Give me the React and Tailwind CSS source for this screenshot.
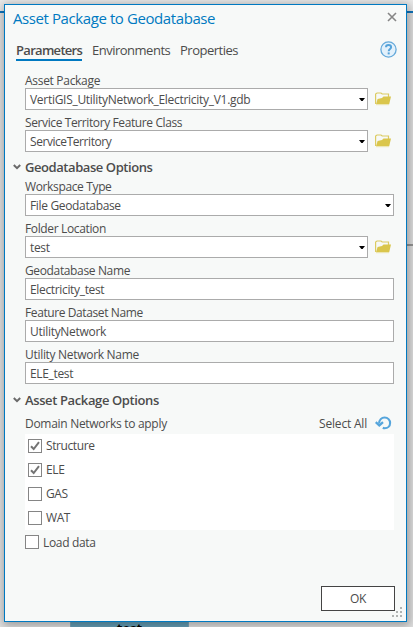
import { useState } from "react";

const DOMAIN_NETWORKS = ["Structure", "ELE", "GAS", "WAT"];

function FolderIcon() {
  return (
    <svg className="h-4 w-4 shrink-0" viewBox="0 0 16 16" fill="none">
      <path d="M0.6 13V3L2 2H6L7.2 3H13.5V6" stroke="#dccb62" strokeWidth="1.2" />
      <path d="M1 13.2L2.6 8L7 7L8.5 5.5H16L14.2 13.2H1Z" fill="#dac64c" />
      <path d="M1 13.7H14" stroke="#ece4ae" />
    </svg>
  );
}

function HelpIcon() {
  return (
    <svg className="h-[17px] w-[17px]" viewBox="0 0 17 17" fill="none">
      <circle cx="8.5" cy="8.5" r="7.6" fill="#e3f1fb" stroke="#64a9da" strokeWidth="1.3" />
      <path d="M6 6.3C6 4.7 7.1 4 8.5 4C10 4 11.1 4.8 11.1 6.2C11.1 8 8.7 8 8.7 10.3" stroke="#55a3da" strokeWidth="2" />
      <rect x="7.7" y="11.4" width="2" height="2" fill="#55a3da" />
    </svg>
  );
}

function ResetIcon() {
  return (
    <svg className="h-[14px] w-[17px] shrink-0" viewBox="0 0 17 14" fill="none">
      <path d="M4.1 7.5C4.1 3.8 6.6 1.5 9.6 1.5C12.9 1.5 15.1 4 15.1 6.9C15.1 10.1 12.6 12.2 9.8 12.2C9.1 12.2 8.4 12.1 7.8 11.8" stroke="#55a5dc" strokeWidth="2.1" />
      <path d="M0.7 6.2L4.3 9.4L8 6.2" stroke="#55a5dc" strokeWidth="2.3" />
    </svg>
  );
}

function Field({ label, value, tracking = "tracking-[-0.36px]", valueTracking = "tracking-[-0.34px]", dropdown, browse }) {
  return (
    <div className="h-[42px]">
      <div className={`h-5 pt-[5px] leading-[15px] whitespace-nowrap ${tracking}`}>{label}</div>
      <div className="flex items-center gap-[7px]">
        <div className="flex h-[22px] flex-1 items-center justify-between border border-[#ababab] bg-white pr-[2px] pl-1">
          <span className={`pt-[2px] leading-[18px] whitespace-nowrap ${valueTracking}`}>{value}</span>
          {dropdown && (
            <svg className="h-[3px] w-[6px]" viewBox="0 0 6 3">
              <path d="M0 0H6L3.6 3H2.4Z" fill="#000" />
            </svg>
          )}
        </div>
        {browse && (
          <div className="w-[19px]">
            <FolderIcon />
          </div>
        )}
      </div>
    </div>
  );
}

function SectionHeader({ title, tracking }) {
  return (
    <div className="-ml-3 flex items-center">
      <svg className="mr-1 -mt-[1px] h-[6px] w-2" viewBox="0 0 8 6" fill="none">
        <path d="M0.8 1L4 4.2L7.2 1" stroke="#6a6a6a" strokeWidth="2" />
      </svg>
      <h2 className={`text-[13px] leading-4 font-semibold whitespace-nowrap ${tracking}`}>{title}</h2>
    </div>
  );
}

function CheckItem({ label, checked, onToggle, tracking = "tracking-[-0.4px]", labelClass = "leading-[14px]" }) {
  return (
    <button type="button" onClick={onToggle} className="flex items-center gap-1">
      <span className="flex h-[14px] w-[14px] items-center justify-center border border-[#858585] bg-white">
        {checked && (
          <svg className="h-[10px] w-[10px]" viewBox="0 0 10 10" fill="none">
            <path d="M1 5.2L3.7 8L9 1.2" stroke="#747474" strokeWidth="2" />
          </svg>
        )}
      </span>
      <span className={`${labelClass} ${tracking}`}>{label}</span>
    </button>
  );
}

export default function App() {
  const [selected, setSelected] = useState(["Structure", "ELE"]);
  const [loadData, setLoadData] = useState(false);

  const toggle = (name) => {
    setSelected((prev) => (prev.includes(name) ? prev.filter((n) => n !== name) : [...prev, name]));
  };

  return (
    <div className="relative h-[627px] w-[413px] overflow-hidden bg-[#e2e2e2] pt-1 pl-1 font-['Open_Sans','Noto_Sans',sans-serif] text-[12px] text-[#4c4c4c]">
      {/* Map view behind the dialog */}
      <div className="absolute top-0 left-0 h-[11px] w-full bg-[#ebebeb]" />
      <div className="absolute top-[11px] left-0 h-[2px] w-full bg-[#0f75bd]" />
      <div className="absolute top-[244px] right-0 h-[2px] w-5 bg-[#969696]" />
      <div className="absolute top-[612px] left-[70px] h-8 w-[119px] border border-[#7fa9bd] bg-[#66a0b9] pt-[7px] text-center text-[13px] leading-4 font-bold text-black">
        test
      </div>

      {/* Dialog */}
      <div className="relative h-[618px] w-[403px] border border-[#0079c1] bg-[#f7f9f8] shadow-[1px_2px_9px_2px_rgba(0,0,0,0.3)]">
        <header className="flex h-[31px] items-start justify-between pt-[3px] pr-[9px] pl-2">
          <h1 className="text-[15px] leading-5 tracking-[-0.41px] whitespace-nowrap text-[#0079c1]">
            Asset Package to Geodatabase
          </h1>
          <svg className="mt-1 h-[10px] w-[10px]" viewBox="0 0 10 10" fill="none">
            <path d="M1 1L9 9M9 1L1 9" stroke="#868686" strokeWidth="1.6" />
          </svg>
        </header>

        <nav className="flex h-[33px] items-start pr-[9px] pl-[11px] text-[13px] leading-[18px] whitespace-nowrap">
          <div className="mr-[10px] h-[25px] w-[66px] border-b-2 border-[#0079c1] pt-[5px] font-semibold tracking-[-0.7px]">
            Parameters
          </div>
          <div className="mr-[10px] w-[78px] pt-[5px] tracking-[-0.5px]">Environments</div>
          <div className="pt-[5px] tracking-[-0.5px]">Properties</div>
          <div className="mt-[5px] ml-auto">
            <HelpIcon />
          </div>
        </nav>

        <main className="pr-3 pl-5">
          <div className="-mt-[1px]">
            <Field
              label="Asset Package"
              tracking="tracking-[-0.3px]"
              value="VertiGIS_UtilityNetwork_Electricity_V1.gdb"
              valueTracking="tracking-[-0.29px]"
              dropdown
              browse
            />
            <Field
              label="Service Territory Feature Class"
              tracking="tracking-[-0.39px]"
              value="ServiceTerritory"
              valueTracking="tracking-[-0.44px]"
              dropdown
              browse
            />
          </div>

          <div className="h-[22px] pt-[7px]">
            <SectionHeader title="Geodatabase Options" tracking="tracking-[-0.43px]" />
          </div>
          <Field label="Workspace Type" value="File Geodatabase" dropdown />
          <Field label="Folder Location" value="test" dropdown browse />
          <Field label="Geodatabase Name" value="Electricity_test" />
          <Field label="Feature Dataset Name" tracking="tracking-[-0.4px]" value="UtilityNetwork" valueTracking="tracking-[-0.29px]" />
          <Field label="Utility Network Name" tracking="tracking-[-0.3px]" value="ELE_test" />

          <div className="h-[30px] pt-[8px]">
            <SectionHeader title="Asset Package Options" tracking="tracking-[-0.38px]" />
          </div>

          <div className="flex h-5 items-center pr-[2px]">
            <span className="tracking-[-0.29px]">Domain Networks to apply</span>
            <button
              type="button"
              onClick={() => setSelected(DOMAIN_NETWORKS)}
              className="mr-[9px] ml-auto tracking-[-0.2px]"
            >
              Select All
            </button>
            <div className="-mt-[3px] -ml-px">
              <ResetIcon />
            </div>
          </div>
          <div className="h-24 bg-white pl-[3px]">
            {DOMAIN_NETWORKS.map((name) => (
              <div key={name} className="flex h-6 items-center">
                <CheckItem label={name} checked={selected.includes(name)} onToggle={() => toggle(name)} />
              </div>
            ))}
          </div>
          <div className="pt-[5px]">
            <CheckItem
              label="Load data"
              tracking="tracking-[-0.33px]"
              labelClass="relative top-px leading-[14px]"
              checked={loadData}
              onToggle={() => setLoadData(!loadData)}
            />
          </div>
        </main>

        <footer className="mt-[37px] flex justify-end pr-[11px]">
          <button type="button" className="h-[25px] w-[74px] border border-[#444] bg-white tracking-[-0.3px]">
            OK
          </button>
        </footer>

        {/* Resize grip */}
        <svg className="absolute right-1 bottom-1 h-[10px] w-[10px]" viewBox="0 0 10 10" fill="#b0b3b2">
          <path d="M8 0h2v2H8zM4 4h2v2H4zM8 4h2v2H8zM0 8h2v2H0zM4 8h2v2H4zM8 8h2v2H8z" />
        </svg>
      </div>
    </div>
  );
}
